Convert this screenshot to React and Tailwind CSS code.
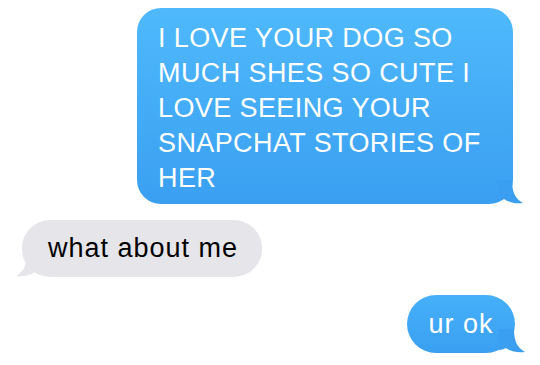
import React from 'react'

const font = { fontFamily: '"Liberation Sans", Arial, sans-serif' }

const TailRight = ({ color }) => (
    <svg className="absolute -right-[10px] bottom-0" width="26" height="24" viewBox="0 0 26 24">
        <path d="M0 0 L15 0 C15 10 17 18 26 23 C18 24 11 22 7 19 C5 20 2 21 0 21 Z" fill={color} />
    </svg>
)

const TailLeft = ({ color }) => (
    <svg className="absolute -left-[6px] bottom-0" width="26" height="24" viewBox="0 0 26 24">
        <path d="M26 0 L11 0 C11 10 9 18 0 23 C8 24 15 22 19 19 C21 20 24 21 26 21 Z" fill={color} />
    </svg>
)

const App = () => {
    return (
        <div className="w-[540px] h-[365px] bg-white overflow-hidden flex flex-col pt-[8px]" style={font}>
            <div className="relative self-end mr-[27px] w-[376px] h-[196px] rounded-[24px] bg-gradient-to-b from-[#4fb9fc] to-[#3a9ff1] pl-[21px] pt-[13px] text-white text-[27px] leading-[35px] tracking-[0.4px]">
                <p>I LOVE YOUR DOG SO</p>
                <p>MUCH SHES SO CUTE I</p>
                <p>LOVE SEEING YOUR</p>
                <p>SNAPCHAT STORIES OF</p>
                <p>HER</p>
                <TailRight color="#3a9ff1" />
            </div>

            <div className="relative self-start ml-[22px] mt-[16px] w-[240px] h-[57px] rounded-[28px] bg-[#e5e5ea] flex items-center pl-[26px] text-black text-[27px] tracking-[1px]">
                what about me
                <TailLeft color="#e5e5ea" />
            </div>

            <div className="relative self-end mr-[25px] mt-[18px] w-[108px] h-[58px] rounded-[29px] bg-gradient-to-b from-[#46b0fa] to-[#3a9ff1] flex items-center justify-center text-white text-[27px] tracking-[1px]">
                ur ok
                <TailRight color="#3a9ff1" />
            </div>
        </div>
    )
}

export default App
